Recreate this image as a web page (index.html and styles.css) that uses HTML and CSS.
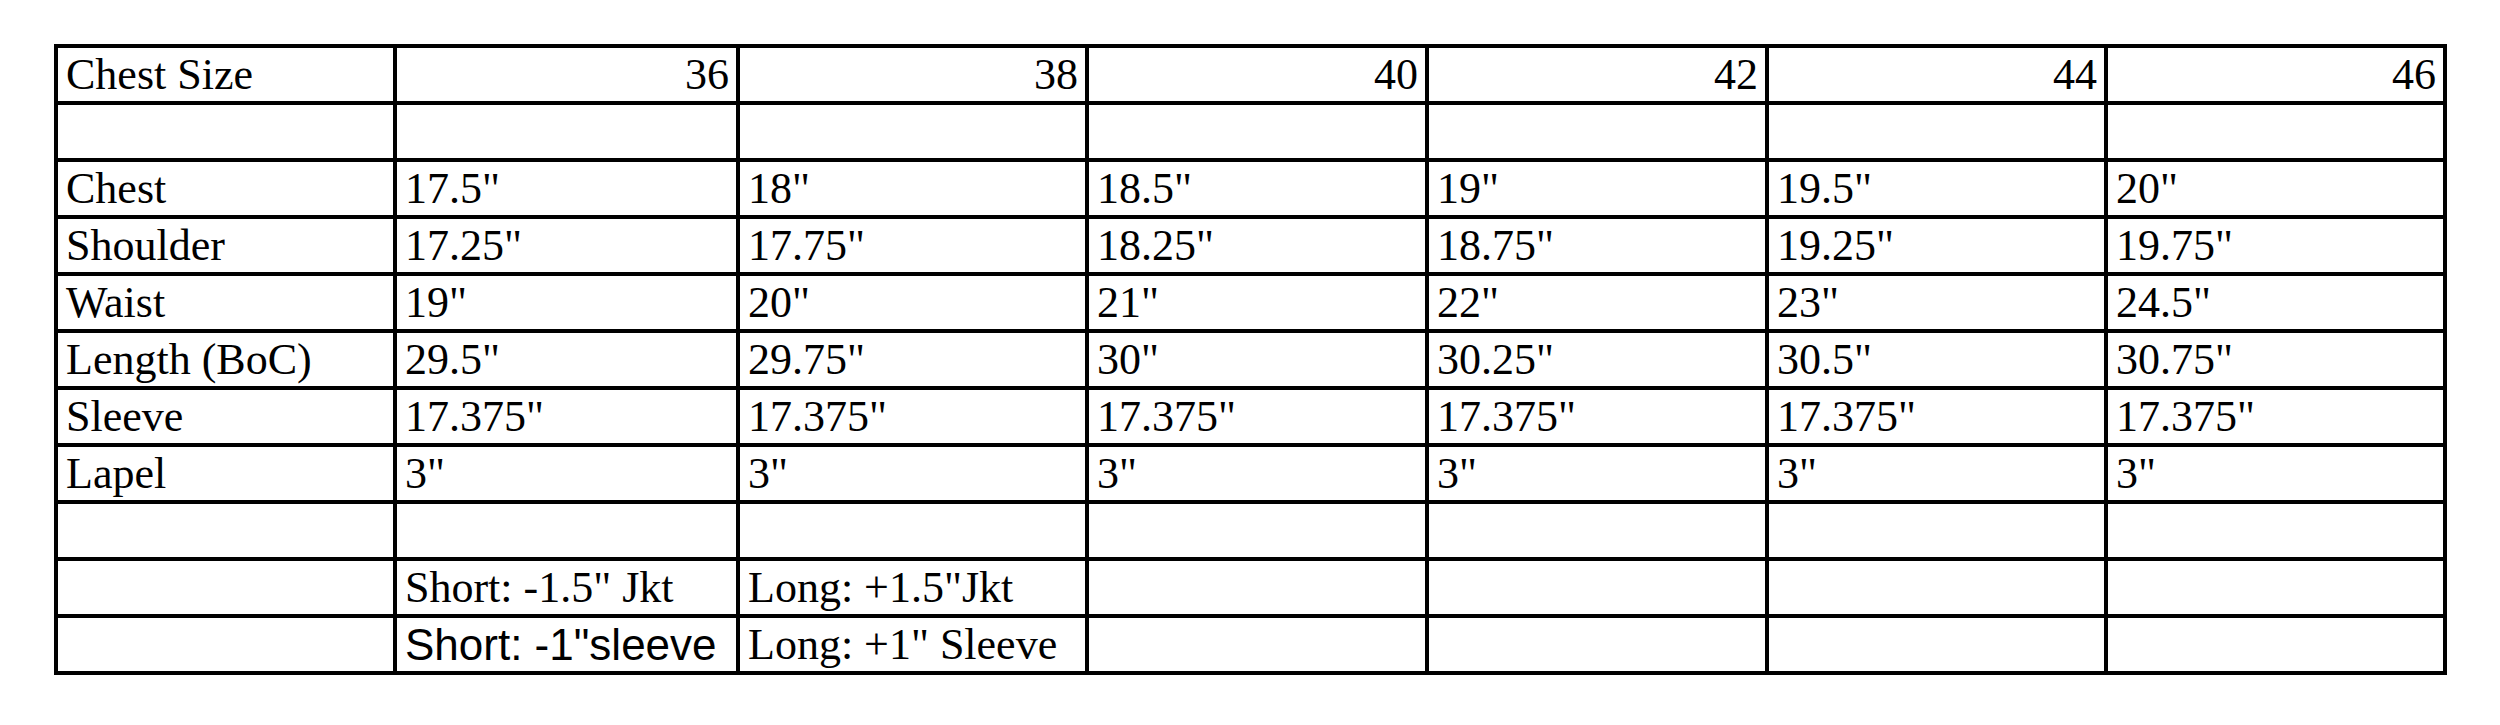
FILE: index.html
```html
<!DOCTYPE html>
<html lang="en">
<head>
<meta charset="utf-8">
<title>Size chart</title>
<link rel="stylesheet" href="styles.css">
</head>
<body>
<div class="page">
  <div class="chart" role="table">
    <div class="cell">Chest Size</div><div class="cell num">36</div><div class="cell num">38</div><div class="cell num">40</div><div class="cell num">42</div><div class="cell num">44</div><div class="cell num">46</div>
    <div class="cell"></div><div class="cell"></div><div class="cell"></div><div class="cell"></div><div class="cell"></div><div class="cell"></div><div class="cell"></div>
    <div class="cell">Chest</div><div class="cell">17.5"</div><div class="cell">18"</div><div class="cell">18.5"</div><div class="cell">19"</div><div class="cell">19.5"</div><div class="cell">20"</div>
    <div class="cell">Shoulder</div><div class="cell">17.25"</div><div class="cell">17.75"</div><div class="cell">18.25"</div><div class="cell">18.75"</div><div class="cell">19.25"</div><div class="cell">19.75"</div>
    <div class="cell">Waist</div><div class="cell">19"</div><div class="cell">20"</div><div class="cell">21"</div><div class="cell">22"</div><div class="cell">23"</div><div class="cell">24.5"</div>
    <div class="cell">Length (BoC)</div><div class="cell">29.5"</div><div class="cell">29.75"</div><div class="cell">30"</div><div class="cell">30.25"</div><div class="cell">30.5"</div><div class="cell">30.75"</div>
    <div class="cell">Sleeve</div><div class="cell">17.375"</div><div class="cell">17.375"</div><div class="cell">17.375"</div><div class="cell">17.375"</div><div class="cell">17.375"</div><div class="cell">17.375"</div>
    <div class="cell">Lapel</div><div class="cell">3"</div><div class="cell">3"</div><div class="cell">3"</div><div class="cell">3"</div><div class="cell">3"</div><div class="cell">3"</div>
    <div class="cell"></div><div class="cell"></div><div class="cell"></div><div class="cell"></div><div class="cell"></div><div class="cell"></div><div class="cell"></div>
    <div class="cell"></div><div class="cell">Short: -1.5" Jkt</div><div class="cell">Long: +1.5"Jkt</div><div class="cell"></div><div class="cell"></div><div class="cell"></div><div class="cell"></div>
    <div class="cell"></div><div class="cell sans">Short: -1"sleeve</div><div class="cell">Long: +1" Sleeve</div><div class="cell"></div><div class="cell"></div><div class="cell"></div><div class="cell"></div>
  </div>
</div>
</body>
</html>
```

FILE: styles.css
```css
html, body {
  margin: 0;
  padding: 0;
  background: #ffffff;
}

.page {
  padding: 44px 0 0 54px;
}

.chart {
  display: inline-grid;
  grid-template-columns: 335px 339px 345px 336px 336px 335px 335px;
  grid-auto-rows: 53px;
  gap: 4px;
  padding: 4px;
  background: #000000;
  font-family: "Liberation Serif", "Times New Roman", serif;
  font-size: 44px;
  color: #000000;
}

.cell {
  background: #ffffff;
  line-height: 53px;
  padding: 0 7px 0 8px;
  white-space: nowrap;
  overflow: hidden;
}

.num {
  text-align: right;
}

.sans {
  font-family: "Liberation Sans", Arial, sans-serif;
  font-size: 44px;
}
```
